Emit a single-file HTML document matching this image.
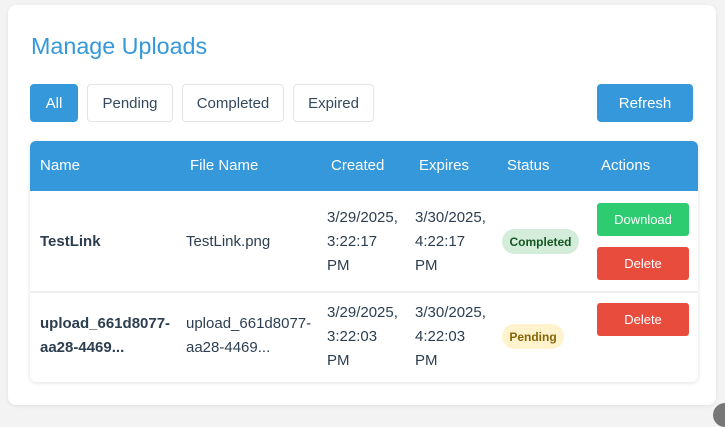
<!DOCTYPE html>
<html><head><style>
*{margin:0;padding:0;box-sizing:border-box}
body{width:725px;height:415px;background:#f3f3f3;font-family:"Liberation Sans",Arial,sans-serif;position:relative;overflow:hidden;color:#2c3e50}
.card{position:absolute;left:8px;top:5px;width:708px;height:400px;background:#fff;border-radius:8px;box-shadow:0 1px 4px rgba(0,0,0,.08)}
.a{position:absolute}
h1{position:absolute;left:31px;top:33px;font-size:23.3px;font-weight:normal;color:#3498db}
.f{position:absolute;top:84px;height:38px;border:1px solid #e3e3e3;border-radius:4px;background:#fff;font-size:15px;color:#34495e;display:flex;align-items:center;justify-content:center}
.tbl{position:absolute;left:30px;top:141px;width:668px;height:241px;border-radius:6px;box-shadow:0 1px 4px rgba(0,0,0,.12);overflow:hidden;background:#fff}
.hd{position:absolute;left:0;top:0;width:668px;height:50px;background:#3498db}
.th{position:absolute;top:16px;color:#fff;font-size:15px}
.t{position:absolute;font-size:15px;line-height:24px;color:#2c3e50}
.b{font-weight:bold}
.btn{position:absolute;left:567px;width:92px;height:33px;border-radius:3px;color:#fff;font-size:13px;display:flex;align-items:center;justify-content:center}
.badge{position:absolute;height:25px;border-radius:13px;font-size:12px;font-weight:bold;display:flex;align-items:center;justify-content:center}
</style></head><body>
<div class="card"></div>
<h1>Manage Uploads</h1>
<div class="f" style="left:30px;width:48px;background:#3498db;border-color:#3498db;color:#fff">All</div>
<div class="f" style="left:87px;width:86px">Pending</div>
<div class="f" style="left:182px;width:102px">Completed</div>
<div class="f" style="left:293px;width:81px">Expired</div>
<div class="f" style="left:597px;width:96px;background:#3498db;border-color:#3498db;color:#fff">Refresh</div>
<div class="tbl">
<div class="hd"></div>
<div class="th" style="left:10px">Name</div>
<div class="th" style="left:160px">File Name</div>
<div class="th" style="left:301px">Created</div>
<div class="th" style="left:389px">Expires</div>
<div class="th" style="left:477px">Status</div>
<div class="th" style="left:571px">Actions</div>
<div class="a" style="left:0;top:150px;width:668px;height:2px;background:#eee"></div>
<div class="t b" style="left:10px;top:89px">TestLink</div>
<div class="t" style="left:156px;top:89px">TestLink.png</div>
<div class="t" style="left:297px;top:65px">3/29/2025,<br>3:22:17<br>PM</div>
<div class="t" style="left:385px;top:65px">3/30/2025,<br>4:22:17<br>PM</div>
<div class="badge" style="left:472px;top:88px;width:77px;background:#d4edda;color:#155724">Completed</div>
<div class="btn" style="top:62px;background:#2ecc71">Download</div>
<div class="btn" style="top:106px;background:#e74c3c">Delete</div>
<div class="t b" style="left:10px;top:171px">upload_661d8077-<br>aa28-4469...</div>
<div class="t" style="left:156px;top:171px">upload_661d8077-<br>aa28-4469...</div>
<div class="t" style="left:297px;top:160px">3/29/2025,<br>3:22:03<br>PM</div>
<div class="t" style="left:385px;top:160px">3/30/2025,<br>4:22:03<br>PM</div>
<div class="badge" style="left:472px;top:183px;width:62px;background:#fff3cd;color:#856404">Pending</div>
<div class="btn" style="top:162px;background:#e74c3c">Delete</div>
</div>
<div class="a" style="left:713px;top:403px;width:24px;height:24px;border-radius:50%;background:#777"></div>
</body></html>
